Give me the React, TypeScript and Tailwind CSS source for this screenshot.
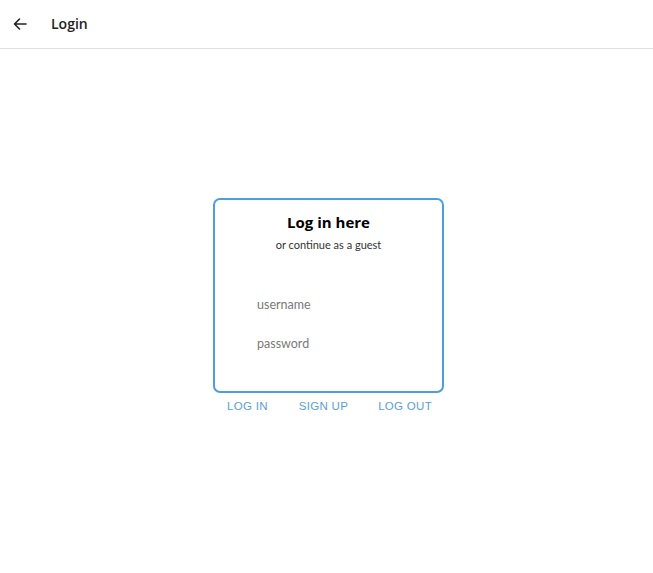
import React from "react";

export default function App() {
  return (
    <div className="w-[653px] h-[573px] bg-white" style={{ fontFamily: '"Open Sans", "Noto Sans", sans-serif' }}>
      <header className="h-[49px] border-b border-[#e0e0e0] flex items-center">
        <div className="w-[38px] flex justify-center pl-[1px]">
          <svg width="14" height="14" viewBox="0 0 14 14" fill="none" stroke="#222" strokeWidth="1.6" strokeLinecap="round" strokeLinejoin="round">
            <path d="M13 7H1.5M6.5 2L1.5 7l5 5" />
          </svg>
        </div>
        <div className="ml-[13px] text-[14px] font-semibold text-[#222] pb-[1px]">Login</div>
      </header>
      <div className="flex flex-col items-start pl-[213px] pt-[149px]">
        <div className="w-[231px] h-[195px] border-2 border-[#4aa0dc] rounded-[7px] flex flex-col">
          <div className="text-center text-[15px] font-bold text-black mt-[12px] leading-[20px]">Log in here</div>
          <div className="text-center text-[11px] text-[#333] mt-[5px] leading-[16px]" style={{ fontFamily: 'Lato, sans-serif' }}>or continue as a guest</div>
          <div className="pl-[42px] mt-[43px] text-[12.5px] text-[#7a7a7a] leading-[18px]" style={{ fontFamily: 'Lato, sans-serif' }}>username</div>
          <div className="pl-[42px] mt-[21px] text-[12.5px] text-[#7a7a7a] leading-[18px]" style={{ fontFamily: 'Lato, sans-serif' }}>password</div>
        </div>
        <div className="flex mt-[6px] text-[11.5px] tracking-[0.3px] text-[#5aa0d8] leading-[14px]" style={{ fontFamily: '"Liberation Sans", Arial, sans-serif' }}>
          <span className="ml-[14px]">LOG IN</span>
          <span className="ml-[31px]">SIGN UP</span>
          <span className="ml-[30px]">LOG OUT</span>
        </div>
      </div>
    </div>
  );
}
